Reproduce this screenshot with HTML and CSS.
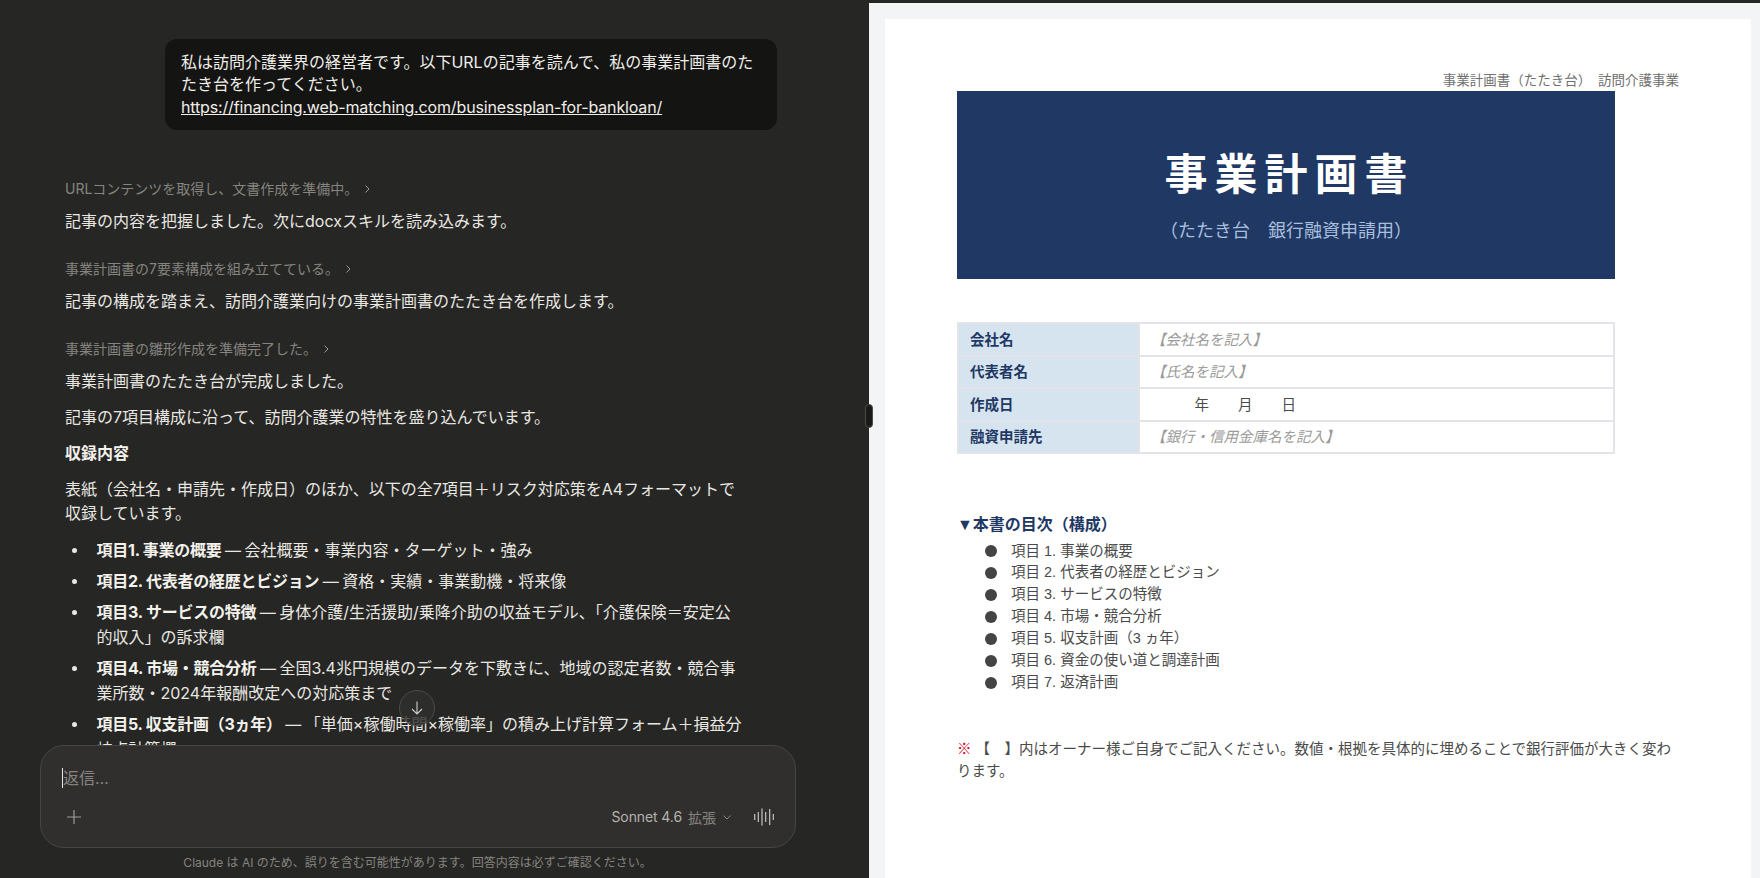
FILE: index.html
```html
<!DOCTYPE html>
<html lang="ja">
<head>
<meta charset="utf-8">
<title>事業計画書</title>
<link rel="stylesheet" href="styles.css">
</head>
<body>
<div class="app">
  <section class="chat">
    <div class="thread">
      <div class="bubble">私は訪問介護業界の経営者です。以下URLの記事を読んで、私の事業計画書のたたき台を作ってください。<br><a href="#">https://financing.web-matching.com/businessplan-for-bankloan/</a></div>

      <div class="status status-first">URLコンテンツを取得し、文書作成を準備中。<svg class="status-chev" viewBox="0 0 10 10"><path d="M3.5 1.500 7 5 3.500 8.500"/></svg></div>
      <p class="para after-status">記事の内容を把握しました。次にdocxスキルを読み込みます。</p>

      <div class="status">事業計画書の7要素構成を組み立てている。<svg class="status-chev" viewBox="0 0 10 10"><path d="M3.5 1.500 7 5 3.500 8.500"/></svg></div>
      <p class="para after-status">記事の構成を踏まえ、訪問介護業向けの事業計画書のたたき台を作成します。</p>

      <div class="status">事業計画書の雛形作成を準備完了した。<svg class="status-chev" viewBox="0 0 10 10"><path d="M3.5 1.500 7 5 3.500 8.500"/></svg></div>
      <p class="para after-status">事業計画書のたたき台が完成しました。</p>
      <p class="para">記事の7項目構成に沿って、訪問介護業の特性を盛り込んでいます。</p>
      <p class="para"><strong>収録内容</strong></p>
      <p class="para">表紙（会社名・申請先・作成日）のほか、以下の全7項目＋リスク対応策をA4フォーマットで<br>収録しています。</p>

      <ul class="items">
        <li><strong>項目1. 事業の概要</strong> — 会社概要・事業内容・ターゲット・強み</li>
        <li><strong>項目2. 代表者の経歴とビジョン</strong> — 資格・実績・事業動機・将来像</li>
        <li><strong>項目3. サービスの特徴</strong> — 身体介護/生活援助/乗降介助の収益モデル、「介護保険＝安定公<br>的収入」の訴求欄</li>
        <li><strong>項目4. 市場・競合分析</strong> — 全国3.4兆円規模のデータを下敷きに、地域の認定者数・競合事<br>業所数・2024年報酬改定への対応策まで</li>
        <li><strong>項目5. 収支計画（3ヵ年）</strong> — 「単価×稼働時間×稼働率」の積み上げ計算フォーム＋損益分<br>岐点計算欄</li>
      </ul>
    </div>

    <button class="scroll-down" aria-label="下へ">
      <svg viewBox="0 0 20 20"><path d="M10 3.500V16M5 11l5 5 5-5"/></svg>
    </button>

    <div class="composer">
      <div class="composer-input"><span class="caret"></span>返信…</div>
      <div class="composer-row">
        <svg class="plus" viewBox="0 0 20 20"><path d="M10 3v14M3 10h14"/></svg>
        <div class="composer-right">
          <span class="model">Sonnet 4.6</span>
          <span class="mode">拡張</span>
          <svg class="mode-chev" viewBox="0 0 10 10"><path d="M1.500 3.500 5 7l3.500-3.500"/></svg>
          <svg class="wave" viewBox="0 0 20 18"><path d="M.7 6v6M4.300 4v10M8 .5v17M11.700 4v10M15.700 1v16M19.300 6v6"/></svg>
        </div>
      </div>
    </div>
    <div class="disclaimer">Claude は AI のため、誤りを含む可能性があります。回答内容は必ずご確認ください。</div>
  </section>

  <span class="handle"></span>

  <section class="viewer">
    <article class="page">
      <div class="page-head">事業計画書（たたき台）　訪問介護事業</div>
      <div class="band">
        <h1 class="band-title">事業計画書</h1>
        <div class="band-sub">（たたき台　銀行融資申請用）</div>
      </div>
      <table class="facts">
        <tr><th>会社名</th><td class="hint">【会社名を記入】</td></tr>
        <tr><th>代表者名</th><td class="hint">【氏名を記入】</td></tr>
        <tr><th>作成日</th><td>　　　年　　月　　日</td></tr>
        <tr><th>融資申請先</th><td class="hint">【銀行・信用金庫名を記入】</td></tr>
      </table>
      <h2 class="toc-title">▼本書の目次（構成）</h2>
      <ul class="toc">
        <li>項目 1. 事業の概要</li>
        <li>項目 2. 代表者の経歴とビジョン</li>
        <li>項目 3. サービスの特徴</li>
        <li>項目 4. 市場・競合分析</li>
        <li>項目 5. 収支計画（3 ヵ年）</li>
        <li>項目 6. 資金の使い道と調達計画</li>
        <li>項目 7. 返済計画</li>
      </ul>
      <p class="note"><span class="mark">※</span> 【　】内はオーナー様ご自身でご記入ください。数値・根拠を具体的に埋めることで銀行評価が大きく変わ<br>ります。</p>
    </article>
  </section>
</div>
</body>
</html>
```
FILE: styles.css
```css
* { box-sizing: border-box; }
html, body { margin: 0; height: 100%; overflow: hidden; }
body {
  font-family: "Inter", "Noto Sans CJK JP", sans-serif;
  background: #262625;
}
.app { display: flex; height: 878px; position: relative; }

/* chat column */
.chat {
  width: 869px;
  flex: none;
  height: 878px;
  display: flex;
  flex-direction: column;
  position: relative;
  background: #262625;
  color: #e9e7e1;
}
.thread {
  height: 745px;
  flex: none;
  overflow: hidden;
  padding: 39px 0 0 65px;
}
.bubble {
  margin-left: 100px;
  width: 612px;
  height: 91px;
  padding: 12px 16px;
  border-radius: 12px;
  background: #141413;
  font-size: 16px;
  line-height: 22.4px;
  color: #f0eee8;
}
.bubble a { color: inherit; text-decoration: underline; letter-spacing: -.15px; }

.status {
  display: flex;
  align-items: center;
  height: 20px;
  margin-top: 26px;
  font-size: 14px;
  line-height: 20px;
  color: #85847f;
}
.status-first { margin-top: 49px; }
.status-chev {
  width: 10px;
  height: 10px;
  margin-left: 4px;
  fill: none;
  stroke: #9a9994;
  stroke-width: 1;
}
.para {
  margin: 12px 0 0;
  font-size: 16px;
  line-height: 24px;
  width: 700px;
}
.after-status { margin-top: 10px; }
.para strong, .items strong { font-weight: 700; color: #f4f2ec; }

.items {
  list-style: none;
  margin: 12.500px 0 0;
  padding: 0 0 0 31.500px;
  font-size: 16px;
  line-height: 25px;
  width: 720px;
  word-spacing: -1px;
}
.items strong { letter-spacing: -.25px; word-spacing: 0; }
.items li { position: relative; margin-bottom: 6px; white-space: nowrap; }
.items li::before {
  content: "";
  position: absolute;
  left: -24.500px;
  top: 10px;
  width: 5px;
  height: 5px;
  border-radius: 50%;
  background: #e9e7e1;
}

.scroll-down {
  position: absolute;
  left: 399px;
  top: 690px;
  width: 36px;
  height: 36px;
  padding: 0;
  border-radius: 50%;
  border: 1px solid #4a4a47;
  background: rgba(48, 48, 46, .82);
  display: flex;
  align-items: center;
  justify-content: center;
}
.scroll-down svg {
  width: 20px;
  height: 20px;
  fill: none;
  stroke: #cfcdc6;
  stroke-width: 1.100;
}

.composer {
  flex: none;
  margin: 0 0 0 40px;
  width: 756px;
  height: 103px;
  padding: 20px 21px 15px 21px;
  border: 1px solid #464643;
  border-radius: 24px;
  background: #302f2e;
  display: flex;
  flex-direction: column;
}
.composer-input {
  height: 24px;
  font-size: 16px;
  line-height: 24px;
  color: #85847f;
  display: flex;
  align-items: center;
}
.caret {
  width: 1px;
  height: 20px;
  background: #e9e7e1;
  flex: none;
}
.composer-row {
  margin-top: 11px;
  height: 32px;
  display: flex;
  align-items: center;
  justify-content: space-between;
}
.plus {
  width: 20px;
  height: 20px;
  margin-left: 2px;
  fill: none;
  stroke: #9c9b95;
  stroke-width: 1.200;
}
.composer-right { display: flex; align-items: center; }
.model { font-size: 14px; color: #b5b3ac; margin-right: -1px; letter-spacing: -.1px; }
.mode { font-size: 14px; color: #85847f; margin-left: 7px; }
.mode-chev {
  width: 10px;
  height: 10px;
  margin-left: 6px;
  fill: none;
  stroke: #85847f;
  stroke-width: 1;
}
.wave {
  width: 20px;
  height: 18px;
  margin-left: 22px;
  fill: none;
  stroke: #c6c4bd;
  stroke-width: 1.200;
}
.disclaimer {
  flex: none;
  height: 30px;
  line-height: 30px;
  text-align: center;
  padding-right: 34px;
  font-size: 12px;
  color: #85847f;
}

/* divider */
.handle {
  position: absolute;
  left: 865px;
  top: 404px;
  width: 8px;
  height: 24px;
  border-radius: 4px;
  background: #1a1a19;
  border: 1px solid #4a4a47;
  z-index: 2;
}

/* document */
.viewer {
  flex: 1;
  height: 878px;
  overflow: hidden;
  background: #f2f4f5;
  border-top: 3px solid #262625;
  padding: 16px 9px 0 16px;
}
.page {
  height: 900px;
  background: #fff;
  padding: 52px 72px 0;
  font-family: "Liberation Sans", "Noto Sans CJK JP", sans-serif;
  color: #4a4a4a;
}
.page-head {
  height: 20px;
  line-height: 20px;
  text-align: right;
  font-size: 13.500px;
  color: #707070;
}
.band {
  width: 658px;
  height: 188px;
  background: #1f3864;
  display: flex;
  flex-direction: column;
  align-items: center;
  padding-top: 60px;
}
.band-title {
  margin: 0;
  padding-left: 7px;
  font-size: 43px;
  line-height: 48px;
  font-weight: 700;
  letter-spacing: 7px;
  color: #fff;
}
.band-sub {
  margin-top: 20px;
  font-size: 18px;
  line-height: 25px;
  color: #a9bfdd;
}
.facts {
  margin-top: 43px;
  width: 658px;
  height: 132px;
  border-collapse: collapse;
  font-size: 14.500px;
  table-layout: fixed;
}
.facts th, .facts td {
  height: 32.500px;
  padding: 0 0 2px 11px;
  border: 2px solid #e2e4e7;
  text-align: left;
  font-weight: 400;
}
.facts th {
  width: 181px;
  background: #d6e4f0;
  color: #1f3864;
  font-weight: 700;
}
.facts .hint { color: #999; font-style: italic; }
.toc-title {
  margin: 60px 0 0;
  font-size: 16px;
  line-height: 22px;
  font-weight: 700;
  color: #1f3864;
}
.toc {
  list-style: none;
  margin: 4.500px 0 0;
  padding: 0 0 0 28px;
  font-size: 14.500px;
  line-height: 21.900px;
}
.toc li { display: flex; align-items: center; gap: 14px; }
.toc li::before {
  content: "";
  width: 12px;
  height: 12px;
  border-radius: 50%;
  background: #444;
  flex: none;
}
.note {
  margin: 44px 0 0;
  font-size: 14.500px;
  line-height: 22px;
  white-space: nowrap;
}
.mark { color: #d0021b; }
```
